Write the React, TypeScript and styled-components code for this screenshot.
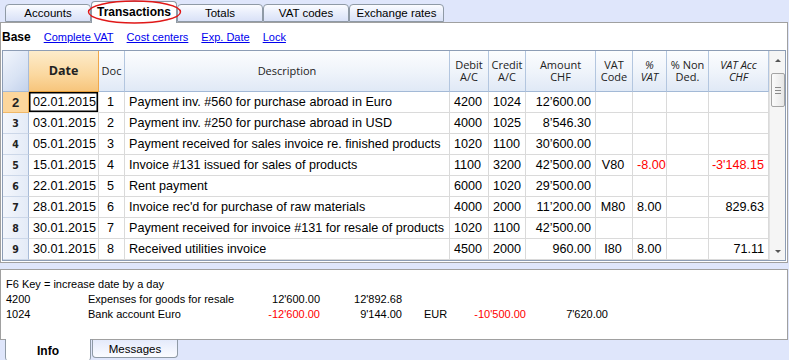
import styled, { createGlobalStyle } from 'styled-components';

const GlobalStyle = createGlobalStyle`
  body {
    margin: 0;
    background: #dfe6fb;
  }
`;

const COLS = '26px 70px 26px 325px 39px 37px 70px 37px 34px 42px 60px';

const Root = styled.div`
  position: relative;
  width: 789px;
  height: 360px;
  overflow: hidden;
  background: #dfe6fb;
  font-family: 'Liberation Sans', Arial, sans-serif;
  color: #000;
`;

const TopTabs = styled.div`
  position: relative;
  z-index: 2;
  display: flex;
  align-items: flex-end;
  height: 22px;
  padding-left: 5px;
`;

const Tab = styled.div<{ $width: number; $active?: boolean }>`
  box-sizing: border-box;
  width: ${({ $width }) => $width}px;
  height: ${({ $active }) => ($active ? 22 : 18)}px;
  margin-bottom: ${({ $active }) => ($active ? -1 : 0)}px;
  display: flex;
  align-items: center;
  justify-content: center;
  border: 1px solid #8f9aa6;
  border-bottom: ${({ $active }) => ($active ? 'none' : '1px solid #8f9aa6')};
  border-radius: 4px 4px 0 0;
  background: ${({ $active }) =>
    $active ? '#fff' : 'linear-gradient(#fbfcff 0%, #eaeffc 45%, #d9e1f7 100%)'};
  font-size: ${({ $active }) => ($active ? 12 : 11.5)}px;
  font-weight: ${({ $active }) => ($active ? 'bold' : 'normal')};
  padding-bottom: ${({ $active }) => ($active ? 2 : 0)}px;
`;

const Ellipse = styled.svg`
  position: absolute;
  left: 87px;
  top: 0;
  z-index: 3;
`;

const MainPanel = styled.div`
  box-sizing: border-box;
  width: 788px;
  height: 241px;
  border: 1px solid #a0a0a0;
  background: #fff;
  display: flex;
  flex-direction: column;
`;

const LinkBar = styled.div`
  height: 27px;
  display: flex;
  align-items: center;
  gap: 13px;
  padding-left: 1px;
  font-size: 11px;
`;

const ViewName = styled.span`
  font-weight: bold;
  font-size: 12px;
`;

const ViewLink = styled.a`
  color: #0000ee;
  text-decoration: underline;
`;

const GridFrame = styled.div`
  box-sizing: border-box;
  margin-left: 1px;
  width: 784px;
  height: 211px;
  border: 1px solid #8d9db5;
  display: flex;
`;

const GridBody = styled.div`
  display: grid;
  grid-template-columns: ${COLS};
  grid-template-rows: 41px repeat(8, 21px);
  width: 766px;
`;

const Corner = styled.div`
  box-sizing: border-box;
  background: linear-gradient(135deg, #f1f5fc 0%, #d9e3f4 60%, #c3d2ec 100%);
  border-right: 1px solid #a9bcd8;
  border-bottom: 1px solid #a3b9d6;
`;

const HeadCell = styled.div<{ $active?: boolean; $italic?: boolean; $bold?: boolean }>`
  box-sizing: border-box;
  display: flex;
  align-items: center;
  justify-content: center;
  text-align: center;
  white-space: pre-line;
  line-height: 12px;
  font-family: 'Open Sans', 'Liberation Sans', sans-serif;
  font-size: ${({ $bold }) => ($bold ? 12.5 : 11)}px;
  font-weight: ${({ $bold }) => ($bold ? 'bold' : 'normal')};
  font-style: ${({ $italic }) => ($italic ? 'italic' : 'normal')};
  color: #222;
  background: ${({ $active }) =>
    $active ? 'linear-gradient(#fdeccb, #fbd89f 60%, #f7c57c)' : 'linear-gradient(#fcfdfe, #eef3fa 55%, #e0e9f6)'};
  border-right: 1px solid ${({ $active }) => ($active ? '#f0a84a' : '#b3c6df')};
  border-bottom: 1px solid ${({ $active }) => ($active ? '#e9a03a' : '#a3b9d6')};
`;

const RowHead = styled.div<{ $active?: boolean }>`
  box-sizing: border-box;
  display: flex;
  align-items: center;
  justify-content: center;
  font-family: ${({ $active }) =>
    $active ? "'Liberation Sans', sans-serif" : "'DejaVu Sans Condensed', 'DejaVu Sans', sans-serif"};
  font-size: ${({ $active }) => ($active ? 13 : 10.5)}px;
  font-weight: bold;
  color: #222;
  background: ${({ $active }) => ($active ? '#fcd69c' : 'linear-gradient(to right, #f3f6fc, #e4ebf7)')};
  border-right: 1px solid ${({ $active }) => ($active ? '#f0ad52' : '#a9bcd8')};
  border-bottom: 1px solid ${({ $active }) => ($active ? '#f0b868' : '#ccd7e8')};
`;

const Cell = styled.div<{ $align?: 'left' | 'right' | 'center'; $red?: boolean; $selected?: boolean }>`
  box-sizing: border-box;
  display: flex;
  align-items: center;
  justify-content: ${({ $align }) =>
    $align === 'right' ? 'flex-end' : $align === 'center' ? 'center' : 'flex-start'};
  padding: 0 ${({ $align }) => ($align === 'right' ? 4 : 2)}px 0 ${({ $align }) => ($align === 'center' ? 0 : 4)}px;
  font-size: 12.6px;
  white-space: nowrap;
  overflow: hidden;
  color: ${({ $red }) => ($red ? '#f00' : '#000')};
  border-right: 1px solid #dadada;
  border-bottom: 1px solid #dadada;
  box-shadow: ${({ $selected }) => ($selected ? 'inset 0 0 0 1.5px #000' : 'none')};
`;

const Scrollbar = styled.div`
  box-sizing: border-box;
  width: 16px;
  display: flex;
  flex-direction: column;
  align-items: center;
  background: #f5f5f5;
  border-left: 1px solid #e2e2e2;
`;

const ArrowBox = styled.div`
  height: 18px;
  display: flex;
  align-items: center;
  justify-content: center;
`;

const Arrow = styled.div<{ $down?: boolean }>`
  width: 0;
  height: 0;
  border-left: 3px solid transparent;
  border-right: 3px solid transparent;
  ${({ $down }) => ($down ? 'border-top: 3px solid #555;' : 'border-bottom: 3px solid #555;')}
`;

const Thumb = styled.div`
  box-sizing: border-box;
  margin-top: 4px;
  width: 14px;
  height: 34px;
  border: 1px solid #a4a4a4;
  border-radius: 2px;
  background: linear-gradient(to right, #fbfbfb, #e6e6e6);
  display: flex;
  flex-direction: column;
  align-items: center;
  justify-content: center;
  gap: 2px;
`;

const Grip = styled.div`
  width: 6px;
  height: 1px;
  background: #8a8a8a;
`;

const Spacer = styled.div`
  flex: 1;
`;

const InfoPanel = styled.div`
  box-sizing: border-box;
  margin-top: 6px;
  width: 788px;
  height: 71px;
  border: 1px solid #a0a0a0;
  background: #fff;
  padding: 6px 0 0 5px;
  display: grid;
  grid-template-columns: 82px 162px 70px 82px 22px 36px 66px 82px;
  grid-auto-rows: 15px;
  align-items: center;
  font-size: 11px;
`;

const InfoLine = styled.div`
  grid-column: 1 / -1;
`;

const InfoCell = styled.div<{ $right?: boolean; $red?: boolean }>`
  text-align: ${({ $right }) => ($right ? 'right' : 'left')};
  color: ${({ $red }) => ($red ? '#f00' : '#000')};
  white-space: nowrap;
`;

const BottomTabs = styled.div`
  position: relative;
  z-index: 2;
  margin-top: -1px;
  display: flex;
  align-items: flex-start;
  padding-left: 5px;
`;

const BottomTab = styled.div<{ $active?: boolean }>`
  box-sizing: border-box;
  width: 86px;
  height: ${({ $active }) => ($active ? 22 : 19)}px;
  display: flex;
  align-items: center;
  justify-content: center;
  font-size: ${({ $active }) => ($active ? 12 : 11.5)}px;
  font-weight: ${({ $active }) => ($active ? 'bold' : 'normal')};
  background: ${({ $active }) => ($active ? '#fff' : 'linear-gradient(#e4eafb, #f2f5fe 60%, #fbfcff)')};
  border: 1px solid #8f9aa6;
  border-top: ${({ $active }) => ($active ? 'none' : '1px solid #a0a0a0')};
  border-bottom: ${({ $active }) => ($active ? 'none' : '1px solid #8f9aa6')};
  border-radius: 0 0 4px 4px;
  padding-top: ${({ $active }) => ($active ? 2 : 0)}px;
  margin-right: 1px;
`;

type Row = {
  n: number;
  date: string;
  doc: string;
  desc: string;
  debit: string;
  credit: string;
  amount: string;
  code?: string;
  pct?: string;
  acc?: string;
  neg?: boolean;
};

const rows: Row[] = [
  { n: 2, date: '02.01.2015', doc: '1', desc: 'Payment inv. #560 for purchase abroad in Euro', debit: '4200', credit: '1024', amount: '12’600.00' },
  { n: 3, date: '03.01.2015', doc: '2', desc: 'Payment inv. #250 for purchase abroad in USD', debit: '4000', credit: '1025', amount: '8’546.30' },
  { n: 4, date: '05.01.2015', doc: '3', desc: 'Payment received for sales invoice re. finished products', debit: '1020', credit: '1100', amount: '30’600.00' },
  { n: 5, date: '15.01.2015', doc: '4', desc: 'Invoice #131 issued for sales of products', debit: '1100', credit: '3200', amount: '42’500.00', code: 'V80', pct: '-8.00', acc: "-3'148.15", neg: true },
  { n: 6, date: '22.01.2015', doc: '5', desc: 'Rent payment', debit: '6000', credit: '1020', amount: '29’500.00' },
  { n: 7, date: '28.01.2015', doc: '6', desc: "Invoice rec'd for purchase of raw materials", debit: '4000', credit: '2000', amount: '11’200.00', code: 'M80', pct: '8.00', acc: '829.63' },
  { n: 8, date: '30.01.2015', doc: '7', desc: 'Payment received for invoice #131 for resale of products', debit: '1020', credit: '1100', amount: '42’500.00' },
  { n: 9, date: '30.01.2015', doc: '8', desc: 'Received utilities invoice', debit: '4500', credit: '2000', amount: '960.00', code: 'I80', pct: '8.00', acc: '71.11' },
];

const tabs = [
  { label: 'Accounts', width: 86 },
  { label: 'Transactions', width: 86, active: true },
  { label: 'Totals', width: 86 },
  { label: 'VAT codes', width: 86 },
  { label: 'Exchange rates', width: 95 },
];

export default function App() {
  return (
    <Root>
      <GlobalStyle />
      <TopTabs>
        {tabs.map((t) => (
          <Tab key={t.label} $width={t.width} $active={t.active}>
            {t.label}
          </Tab>
        ))}
      </TopTabs>
      <Ellipse width="96" height="25" viewBox="0 0 96 25">
        <ellipse cx="47.5" cy="12" rx="46" ry="11" fill="none" stroke="#e01818" strokeWidth="1.4" />
      </Ellipse>

      <MainPanel>
        <LinkBar>
          <ViewName>Base</ViewName>
          <ViewLink>Complete VAT</ViewLink>
          <ViewLink>Cost centers</ViewLink>
          <ViewLink>Exp. Date</ViewLink>
          <ViewLink>Lock</ViewLink>
        </LinkBar>
        <GridFrame>
          <GridBody>
            <Corner />
            <HeadCell $active $bold>Date</HeadCell>
            <HeadCell>Doc</HeadCell>
            <HeadCell>Description</HeadCell>
            <HeadCell>{'Debit\nA/C'}</HeadCell>
            <HeadCell>{'Credit\nA/C'}</HeadCell>
            <HeadCell>{'Amount\nCHF'}</HeadCell>
            <HeadCell>{'VAT\nCode'}</HeadCell>
            <HeadCell $italic>{'%\nVAT'}</HeadCell>
            <HeadCell>{'% Non\nDed.'}</HeadCell>
            <HeadCell $italic>{'VAT Acc\nCHF'}</HeadCell>
            {rows.map((r) => [
              <RowHead key={`h${r.n}`} $active={r.n === 2}>{r.n}</RowHead>,
              <Cell key={`d${r.n}`} $selected={r.n === 2}>{r.date}</Cell>,
              <Cell key={`o${r.n}`} $align="center">{r.doc}</Cell>,
              <Cell key={`s${r.n}`}>{r.desc}</Cell>,
              <Cell key={`b${r.n}`}>{r.debit}</Cell>,
              <Cell key={`c${r.n}`}>{r.credit}</Cell>,
              <Cell key={`a${r.n}`} $align="right">{r.amount}</Cell>,
              <Cell key={`v${r.n}`} $align="center">{r.code}</Cell>,
              <Cell key={`p${r.n}`} $red={r.neg}>{r.pct}</Cell>,
              <Cell key={`x${r.n}`} />,
              <Cell key={`z${r.n}`} $align="right" $red={r.neg}>{r.acc}</Cell>,
            ])}
          </GridBody>
          <Scrollbar>
            <ArrowBox>
              <Arrow />
            </ArrowBox>
            <Thumb>
              <Grip />
              <Grip />
              <Grip />
            </Thumb>
            <Spacer />
            <ArrowBox>
              <Arrow $down />
            </ArrowBox>
          </Scrollbar>
        </GridFrame>
      </MainPanel>

      <InfoPanel>
        <InfoLine>F6 Key = increase date by a day</InfoLine>
        <InfoCell>4200</InfoCell>
        <InfoCell>Expenses for goods for resale</InfoCell>
        <InfoCell $right>12'600.00</InfoCell>
        <InfoCell $right>12'892.68</InfoCell>
        <InfoCell />
        <InfoCell />
        <InfoCell />
        <InfoCell />
        <InfoCell>1024</InfoCell>
        <InfoCell>Bank account Euro</InfoCell>
        <InfoCell $right $red>-12'600.00</InfoCell>
        <InfoCell $right>9'144.00</InfoCell>
        <InfoCell />
        <InfoCell>EUR</InfoCell>
        <InfoCell $right $red>-10'500.00</InfoCell>
        <InfoCell $right>7'620.00</InfoCell>
      </InfoPanel>
      <BottomTabs>
        <BottomTab $active>Info</BottomTab>
        <BottomTab>Messages</BottomTab>
      </BottomTabs>
    </Root>
  );
}
